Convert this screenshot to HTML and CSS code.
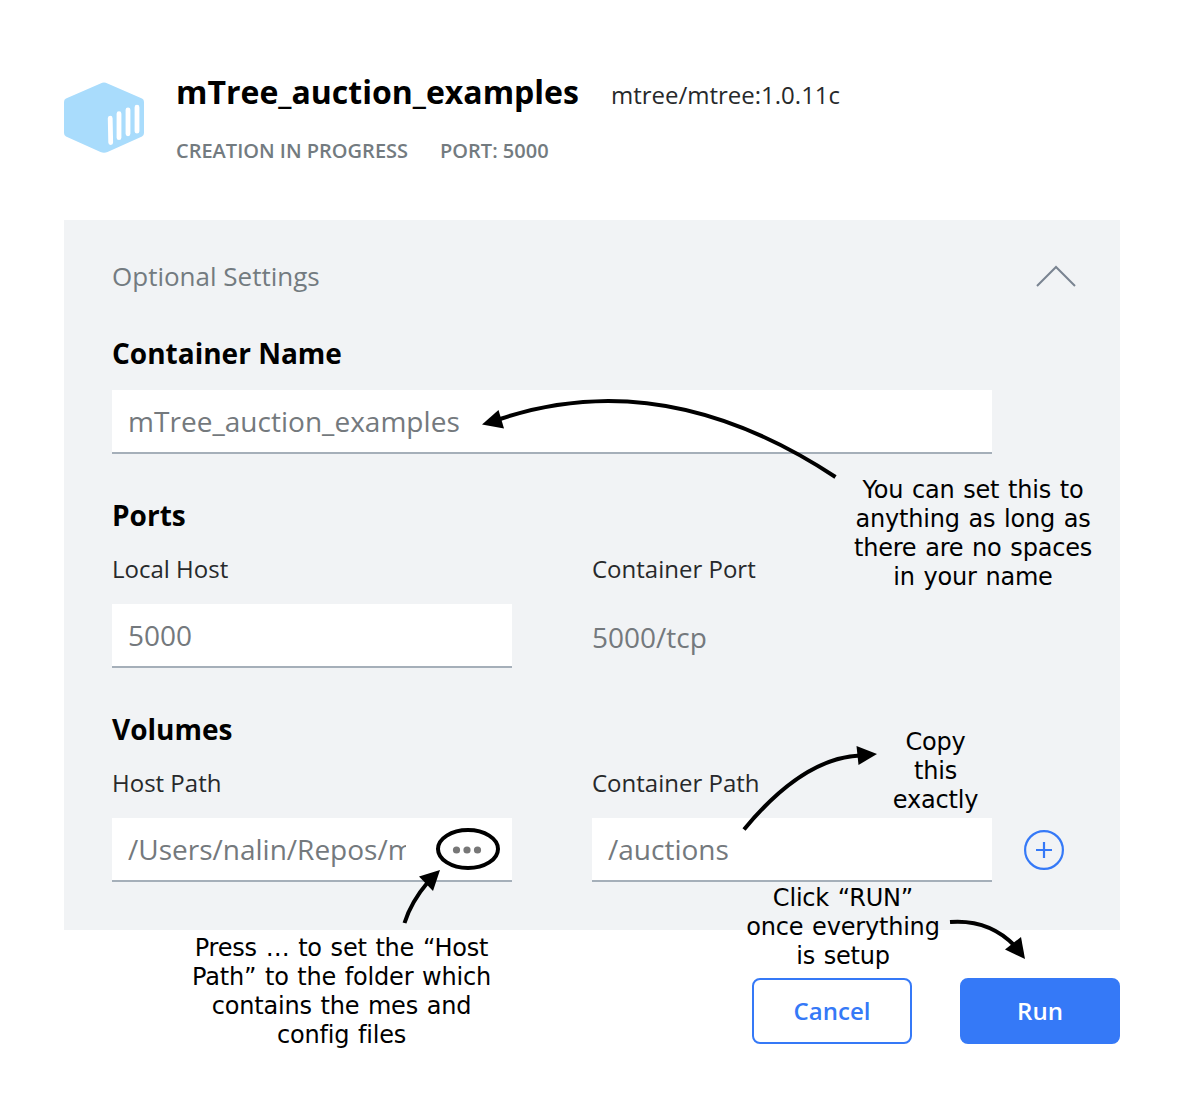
FILE: index.html
```html
<!DOCTYPE html>
<html lang="en">
<head>
<meta charset="utf-8">
<title>mTree_auction_examples</title>
<link rel="stylesheet" href="styles.css">
</head>
<body>
<main class="page">
  <header class="header">
    <svg class="logo" width="80" height="72" viewBox="0 0 80 72">
      <path d="M36.5 1.5Q40-.3 43.500 1.500L78 16.600Q80 17.500 80 20V51Q80 53.500 78 54.500L43.500 70Q40 71.600 36.500 70L2 54.500Q0 53.500 0 51V20Q0 17.500 2 16.600Z" fill="#a9dcfc"/>
      <path d="M46.200 36.200L46.700 60.500M55 31.700V55.700M64 27.800V51.800M73 25.200V49.200" stroke="#fff" stroke-width="4.800" stroke-linecap="round"/>
    </svg>
    <div class="titles">
      <div class="title-row">
        <h1 class="title">mTree_auction_examples</h1>
        <span class="image-name">mtree/mtree:1.0.11c</span>
      </div>
      <div class="status-row">
        <span>CREATION IN PROGRESS</span>
        <span>PORT: 5000</span>
      </div>
    </div>
  </header>

  <section class="panel">
    <div class="panel-head">
      <span class="panel-title">Optional Settings</span>
      <svg class="chevron" width="42" height="24" viewBox="0 0 42 24"><path d="M2 22L21 3L40 22" fill="none" stroke="#7a8491" stroke-width="2"/></svg>
    </div>

    <div class="group first">
      <h2 class="group-title">Container Name</h2>
      <div class="input name-input">mTree_auction_examples</div>
    </div>

    <div class="group">
      <h2 class="group-title">Ports</h2>
      <div class="columns">
        <div class="field">
          <div class="label">Local Host</div>
          <div class="input">5000</div>
        </div>
        <div class="field">
          <div class="label">Container Port</div>
          <div class="value">5000/tcp</div>
        </div>
      </div>
    </div>

    <div class="group">
      <h2 class="group-title">Volumes</h2>
      <div class="columns">
        <div class="field">
          <div class="label">Host Path</div>
          <div class="input path-input">
            <span class="path">/Users/nalin/Repos/m</span>
            <svg class="dots" width="30" height="8" viewBox="0 0 30 8" fill="#777"><circle cx="4.500" cy="4" r="3.600"/><circle cx="15" cy="4" r="3.600"/><circle cx="25.500" cy="4" r="3.600"/></svg>
          </div>
        </div>
        <div class="field">
          <div class="label">Container Path</div>
          <div class="input">/auctions</div>
        </div>
        <svg class="add" width="40" height="40" viewBox="0 0 40 40" fill="none" stroke="#3579f7"><circle cx="20" cy="20" r="18.900" stroke-width="2.200"/><path d="M12 20H28M20 12V28" stroke-width="2.200"/></svg>
      </div>
    </div>
  </section>

  <footer class="actions">
    <button class="button">Cancel</button>
    <button class="button primary">Run</button>
  </footer>

  <svg class="arrows" width="1182" height="1106" viewBox="0 0 1182 1106" fill="none" stroke="#000" stroke-width="4">
    <path d="M835.500 477Q664 364 500 419"/>
    <path d="M744 829.500Q803 758 860 755.500"/>
    <path d="M404.500 923Q411 902 428 882"/>
    <path d="M950 922Q989 919 1015 946"/>
    <ellipse cx="468" cy="849" rx="30" ry="19"/>
    <g fill="#000" stroke="none">
      <path d="M482 424.500L498.500 410L504 428.500Z"/>
      <path d="M877 754L856.500 746L858.500 765Z"/>
      <path d="M440 870L419 876.500L433 891Z"/>
      <path d="M1025 959L1021 937L1005 949.500Z"/>
    </g>
  </svg>
  <p class="note note-name">You can set this to<br>anything as long as<br>there are no spaces<br>in your name</p>
  <p class="note note-copy">Copy<br>this<br>exactly</p>
  <p class="note note-run">Click “RUN”<br>once everything<br>is setup</p>
  <p class="note note-host">Press … to set the “Host<br>Path” to the folder which<br>contains the mes and<br>config files</p>
</main>
</body>
</html>
```
FILE: styles.css
```css
* { box-sizing: border-box; }
body { margin: 0; background: #fff; font-family: "Open Sans", sans-serif; color: #000; }
h1, h2, p { margin: 0; }
.page { position: relative; width: 1182px; height: 1106px; padding: 70px 62px 0 64px; overflow: hidden; }
.header { display: flex; gap: 32px; height: 150px; }
.logo { margin-top: 12px; }
.title-row { display: flex; align-items: baseline; gap: 32px; height: 44px; }
.title { font-size: 32px; line-height: 44px; font-weight: 700; }
.image-name { font-size: 24px; line-height: 32px; color: #27292b; }
.status-row { display: flex; gap: 32px; margin-top: 23px; font-size: 20px; line-height: 28px; font-weight: 600; color: #737b80; }
.panel { height: 710px; padding: 32px 44px 48px 48px; background: #f1f3f5; }
.panel-head { display: flex; justify-content: space-between; align-items: center; height: 48px; font-size: 26px; color: #737b80; }
.chevron { margin-right: -1px; }
.group { margin-top: 41px; }
.group.first { margin-top: 33px; }
.group-title { font-size: 28px; line-height: 40px; font-weight: 700; }
.input { height: 64px; padding: 0 16px; border-bottom: 2px solid #a5afb9; background: #fff; font-size: 28px; line-height: 62px; color: #74797d; white-space: nowrap; }
.name-input { width: 880px; margin-top: 17px; letter-spacing: 0.03px; }
.columns { display: flex; gap: 80px; margin-top: 18px; }
.field { width: 400px; }
.label { margin-bottom: 19px; font-size: 24px; line-height: 32px; color: #27292b; }
.value { height: 64px; font-size: 28px; line-height: 66px; color: #74797d; }
.path-input { display: flex; align-items: center; justify-content: space-between; }
.path { width: 278px; overflow: hidden; }
.dots { margin: 2px 14px 0 0; }
.add { align-self: flex-end; margin: 0 0 12px -48px; }
.actions { display: flex; justify-content: flex-end; gap: 48px; margin-top: 48px; }
.button { width: 160px; height: 66px; padding: 0; border: 2px solid #3579f7; border-radius: 8px; background: #fff; color: #3579f7; font: 600 24px/62px "Open Sans", sans-serif; }
.primary { background: #3579f7; color: #fff; }
.arrows { position: absolute; left: 0; top: 0; }
.note { position: absolute; transform: translateX(-50%); font: 24px/29px "DejaVu Sans", sans-serif; letter-spacing: -0.2px; word-spacing: 1.3px; text-align: center; white-space: nowrap; }
.note-name { left: 973px; top: 476px; }
.note-copy { left: 935.5px; top: 728px; }
.note-run { left: 843px; top: 884px; }
.note-host { left: 341.5px; top: 934px; }
```
